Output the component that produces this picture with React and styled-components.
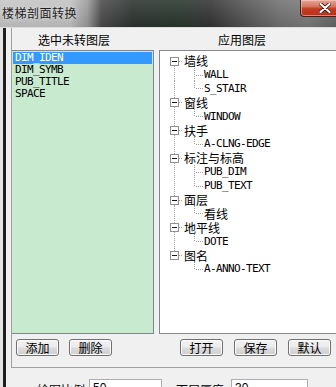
import React from "react";
import styled, { createGlobalStyle } from "styled-components";

const GlobalStyle = createGlobalStyle`
  html, body { margin: 0; padding: 0; background: #f0f0f0; }
  body { font-family: "Noto Sans CJK SC", "Liberation Sans", sans-serif; }
`;

const Screen = styled.div`
  width: 336px;
  height: 387px;
  overflow: hidden;
  background: #f0f0f0;
`;

const Window = styled.div`
  width: 350px;
  display: flex;
  flex-direction: column;
`;

const TitleBar = styled.div`
  height: 27px;
  display: flex;
  align-items: flex-start;
  border-bottom: 1px solid #dcdcdc;
  background:
    linear-gradient(180deg, rgba(255, 255, 255, 0.12), rgba(0, 0, 0, 0.08)),
    linear-gradient(90deg, #c6c6c6 0%, #c2c2c2 20%, #9a9a9a 25%, #4a4a4a 29%,
      #2c332f 38%, #27362d 50%, #333 60%, #545454 70%, #707070 80%, #7a7a7a 88%, #5a5a5a 100%);
`;

const Title = styled.div`
  padding: 5px 0 0 2px;
  font-size: 12px;
  letter-spacing: 0.5px;
  line-height: 16px;
  color: #1e1e1e;
  text-shadow: 0 0 5px rgba(255, 255, 255, 0.7);
`;

const CloseButton = styled.div`
  margin-left: auto;
  width: 50px;
  height: 17px;
  box-sizing: border-box;
  border: 1px solid #4a1d14;
  border-top: none;
  border-radius: 0 0 4px 4px;
  background: linear-gradient(180deg, #e6a597 0%, #d77461 40%, #c23b22 55%, #b8301c 100%);
  box-shadow: inset 0 0 0 1px rgba(255, 220, 210, 0.5);
  display: flex;
  align-items: center;
  justify-content: center;
`;

const Body = styled.div`
  display: flex;
  border-left: 3px solid #e4e4e4;
`;

const Frame = styled.div`
  flex: 1;
  border-left: 3px solid #1f1f1f;
  padding-left: 5px;
  display: flex;
  flex-direction: column;
`;

const GroupBox = styled.div`
  border-left: 1px solid #a0a0a0;
  border-bottom: 1px solid #a0a0a0;
  padding-bottom: 11px;
`;

const Columns = styled.div`
  display: grid;
  grid-template-columns: 142px 1fr;
  column-gap: 5px;
`;

const Header = styled.div`
  height: 22px;
  line-height: 23px;
  font-size: 12px;
  color: #000;
  padding-left: ${(p) => p.$indent}px;
`;

const Panel = styled.div`
  height: 284px;
  box-sizing: border-box;
  border: 1px solid #828790;
  border-left: ${(p) => (p.$flushLeft ? "none" : "1px solid #828790")};
  background: ${(p) => p.$bg};
  padding: ${(p) => p.$pad};
  overflow: hidden;
`;

const ListItem = styled.div`
  height: 12px;
  line-height: 12px;
  padding-left: 2px;
  font-family: "DejaVu Sans Mono", "Liberation Mono", monospace;
  font-size: 11px;
  letter-spacing: -0.62px;
  color: ${(p) => (p.$selected ? "#fff" : "#000")};
  background: ${(p) => (p.$selected ? "#3399ff" : "transparent")};
`;

const TreeRow = styled.div`
  height: 13.9px;
  display: flex;
  align-items: center;
`;

const TreeLabel = styled.span`
  line-height: 13px;
  white-space: nowrap;
  color: #000;
  font-family: ${(p) =>
    p.$mono
      ? '"DejaVu Sans Mono", "Liberation Mono", monospace'
      : '"Noto Sans CJK SC", sans-serif'};
  font-size: ${(p) => (p.$mono ? "11px" : "12px")};
  letter-spacing: ${(p) => (p.$mono ? "-0.62px" : "0")};
`;

const ButtonRow = styled.div`
  display: flex;
  gap: ${(p) => p.$gap}px;
  padding-left: ${(p) => p.$indent}px;
  margin-top: 5px;
`;

const Button = styled.div`
  width: 43px;
  height: 17px;
  box-sizing: border-box;
  border: 1px solid #707070;
  border-radius: 3px;
  background: linear-gradient(180deg, #f2f2f2 0%, #ebebeb 48%, #dddddd 52%, #cfcfcf 100%);
  box-shadow: inset 0 0 0 1px #fcfcfc;
  font-size: 12px;
  line-height: 15px;
  text-align: center;
  color: #000;
`;

const FieldRow = styled.div`
  display: flex;
  align-items: center;
  margin-top: 11px;
  padding-left: 26px;
`;

const FieldLabel = styled.span`
  font-size: 12px;
  color: #000;
  margin-right: ${(p) => p.$gap}px;
  margin-left: ${(p) => p.$lead}px;
`;

const Combo = styled.div`
  width: ${(p) => p.$width}px;
  height: 21px;
  box-sizing: border-box;
  border: 1px solid #abadb3;
  background: #fff;
  display: flex;
  align-items: flex-start;
  justify-content: space-between;
  padding: 1px 6px 0 3px;
  font-family: "Liberation Sans", sans-serif;
  font-size: 12px;
  line-height: 14px;
`;

const leftItems = ["DIM_IDEN", "DIM_SYMB", "PUB_TITLE", "SPACE"];

const tree = [
  { name: "墙线", children: ["WALL", "S_STAIR"] },
  { name: "窗线", children: ["WINDOW"] },
  { name: "扶手", children: ["A-CLNG-EDGE"] },
  { name: "标注与标高", children: ["PUB_DIM", "PUB_TEXT"] },
  { name: "面层", children: ["看线"] },
  { name: "地平线", children: ["DOTE"] },
  { name: "图名", children: ["A-ANNO-TEXT"] },
];

const dot = { stroke: "#a0a0a0", strokeWidth: 1, strokeDasharray: "1 1", shapeRendering: "crispEdges" };

function RootLines({ first, last }) {
  return (
    <svg width="24" height="14" style={{ display: "block", flex: "none", overflow: "visible" }}>
      {!first && <line x1="14.5" y1="0" x2="14.5" y2="3" style={dot} />}
      {!last && <line x1="14.5" y1="12" x2="14.5" y2="14" style={dot} />}
      <line x1="19" y1="7.5" x2="23" y2="7.5" style={dot} />
      <rect x="10.5" y="3.5" width="8" height="8" fill="#fff" stroke="#919191" shapeRendering="crispEdges" />
      <line x1="12" y1="7.5" x2="17" y2="7.5" stroke="#1a1a1a" shapeRendering="crispEdges" />
    </svg>
  );
}

function ChildLines({ lastChild, rootLast }) {
  return (
    <svg width="44" height="14" style={{ display: "block", flex: "none", overflow: "visible" }}>
      {!rootLast && <line x1="14.5" y1="0" x2="14.5" y2="14" style={dot} />}
      <line x1="34.5" y1="0" x2="34.5" y2={lastChild ? 8 : 14} style={dot} />
      <line x1="36" y1="7.5" x2="43" y2="7.5" style={dot} />
    </svg>
  );
}

function Arrow() {
  return (
    <svg width="7" height="4" style={{ marginTop: 6 }}>
      <path d="M0 0 L7 0 L3.5 4 Z" fill="#1a1a1a" />
    </svg>
  );
}

export default function App() {
  return (
    <Screen>
      <GlobalStyle />
      <Window>
        <TitleBar>
          <Title>楼梯剖面转换</Title>
          <CloseButton>
            <svg width="12" height="10" viewBox="0 0 12 10">
              <path d="M1 0.5 L11 9.5 M11 0.5 L1 9.5" stroke="#3a120b" strokeWidth="3.6" strokeLinecap="round" />
              <path d="M1.5 1 L10.5 9 M10.5 1 L1.5 9" stroke="#ffffff" strokeWidth="2.2" strokeLinecap="round" />
            </svg>
          </CloseButton>
        </TitleBar>
        <Body>
          <Frame>
            <GroupBox>
              <Columns>
                <Header $indent={26}>选中未转图层</Header>
                <Header $indent={59}>应用图层</Header>
                <Panel $flushLeft $bg="#c8ebcf" $pad="1px">
                  {leftItems.map((t, i) => (
                    <ListItem key={t} $selected={i === 0}>
                      {t}
                    </ListItem>
                  ))}
                </Panel>
                <Panel $bg="#fff" $pad="2.7px 0 0 0">
                  {tree.map((node, i) => {
                    const rootLast = i === tree.length - 1;
                    return (
                      <React.Fragment key={node.name}>
                        <TreeRow>
                          <RootLines first={i === 0} last={rootLast} />
                          <TreeLabel>{node.name}</TreeLabel>
                        </TreeRow>
                        {node.children.map((c, j) => (
                          <TreeRow key={c}>
                            <ChildLines lastChild={j === node.children.length - 1} rootLast={rootLast} />
                            <TreeLabel $mono={!/[\u4e00-\u9fff]/.test(c)}>{c}</TreeLabel>
                          </TreeRow>
                        ))}
                      </React.Fragment>
                    );
                  })}
                </Panel>
                <ButtonRow $indent={4} $gap={10}>
                  <Button>添加</Button>
                  <Button>删除</Button>
                </ButtonRow>
                <ButtonRow $indent={21} $gap={11}>
                  <Button>打开</Button>
                  <Button>保存</Button>
                  <Button>默认</Button>
                </ButtonRow>
              </Columns>
            </GroupBox>
            <FieldRow>
              <FieldLabel $gap={4} $lead={0}>绘图比例</FieldLabel>
              <Combo $width={73}>
                <span>50</span>
                <Arrow />
              </Combo>
              <FieldLabel $gap={7} $lead={14}>下层厚度</FieldLabel>
              <Combo $width={77}>
                <span>30</span>
                <Arrow />
              </Combo>
            </FieldRow>
          </Frame>
        </Body>
      </Window>
    </Screen>
  );
}
